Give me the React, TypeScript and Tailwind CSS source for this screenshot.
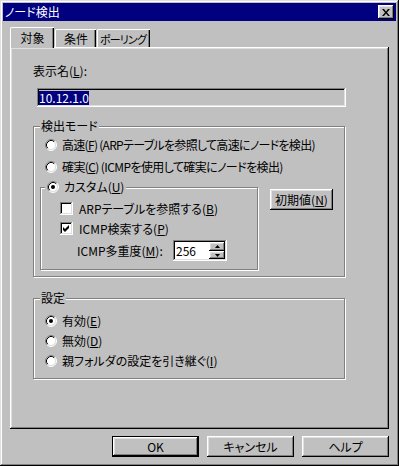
import React from "react";

const raised =
  "shadow-[inset_-1px_-1px_#000,inset_1px_1px_#fff,inset_-2px_-2px_#808080,inset_2px_2px_#dfdfdf]";
const sunken =
  "shadow-[inset_-1px_-1px_#fff,inset_1px_1px_#808080,inset_-2px_-2px_#dfdfdf,inset_2px_2px_#000]";

const Radio = ({ checked = false }: { checked?: boolean }) => (
  <svg width="12" height="12" viewBox="0 0 12 12" className="shrink-0">
    <circle cx="6" cy="6" r="5" fill="#fff" />
    <path d="M2.11 9.89 A5.5 5.5 0 0 1 9.89 2.11" fill="none" stroke="#808080" />
    <path d="M9.89 2.11 A5.5 5.5 0 0 1 2.11 9.89" fill="none" stroke="#fff" />
    <path d="M2.82 9.18 A4.5 4.5 0 0 1 9.18 2.82" fill="none" stroke="#000" />
    <path d="M9.18 2.82 A4.5 4.5 0 0 1 2.82 9.18" fill="none" stroke="#dfdfdf" />
    {checked && <circle cx="6" cy="6" r="2" fill="#000" />}
  </svg>
);

const Check = ({ checked = false }: { checked?: boolean }) => (
  <div className={`w-[13px] h-[13px] shrink-0 bg-white ${sunken}`}>
    {checked && (
      <svg width="13" height="13" viewBox="0 0 13 13">
        <path d="M3 5 l2 2 l4 -4 v3 l-4 4 l-2 -2 z" fill="#000" />
      </svg>
    )}
  </div>
);

const Group = ({
  label,
  className,
  children,
}: {
  label: React.ReactNode;
  className: string;
  children: React.ReactNode;
}) => (
  <div
    className={`relative border border-[#808080] shadow-[inset_1px_1px_#fff,1px_1px_#fff] ${className}`}
  >
    <div className="absolute top-[-9px] left-[6px] bg-[#c0c0c0] px-[1px]">{label}</div>
    {children}
  </div>
);

const Button = ({
  children,
  className = "",
  isDefault = false,
}: {
  children: React.ReactNode;
  className?: string;
  isDefault?: boolean;
}) => (
  <div className={`${isDefault ? "border border-black" : ""} ${className}`}>
    <div className={`w-full h-full flex items-center justify-center ${raised}`}>{children}</div>
  </div>
);

export default function App() {
  return (
    <div className="w-[399px] h-[466px] bg-[#c0c0c0] p-[3px] shadow-[inset_-1px_-1px_#000,inset_1px_1px_#dfdfdf,inset_-2px_-2px_#808080,inset_2px_2px_#fff] text-[12px] leading-4 text-black whitespace-nowrap [font-feature-settings:'palt'] font-['Noto_Sans_CJK_JP',sans-serif]">
      {/* title bar */}
      <div className="h-[18px] bg-[#000080] flex items-center justify-between px-[2px]">
        <span className="text-white">ノード検出</span>
        <div className={`w-[16px] h-[14px] bg-[#c0c0c0] flex items-center justify-center ${raised}`}>
          <svg width="8" height="7" viewBox="0 0 8 7">
            <path d="M0 0h2l2 2.5L6 0h2L5 3.5L8 7H6L4 4.5L2 7H0l3-3.5z" fill="#000" />
          </svg>
        </div>
      </div>

      <div className="px-[7px] pt-[6px]">
        {/* tabs */}
        <div className="flex items-end h-[20px]">
          <div className="relative z-10 -mb-px h-[21px] w-[44px] bg-[#c0c0c0] border-t border-l border-white rounded-tl-[2px] shadow-[inset_-1px_0_#000,inset_-2px_0_#808080] flex items-center justify-center">
            対象
          </div>
          <div className="ml-[1px] h-[18px] w-[41px] border-t border-l border-white rounded-tl-[2px] shadow-[inset_-1px_0_#000,inset_-2px_0_#808080] flex items-center justify-center">
            条件
          </div>
          <div className="ml-[1px] h-[18px] w-[53px] border-t border-l border-white rounded-tl-[2px] shadow-[inset_-1px_0_#000,inset_-2px_0_#808080] flex items-center justify-center text-[11px] tracking-[-0.8px] pr-[2px]">
            ポーリング
          </div>
        </div>

        {/* panel */}
        <div className={`h-[382px] pt-[16px] pl-[23px] ${raised}`}>
          <div>
            表示名(<u>L</u>):
          </div>
          <div className={`mt-[9px] ml-[4px] w-[309px] h-[19px] bg-[#c0c0c0] flex items-center pl-[2px] ${sunken}`}>
            <span className="bg-[#000080] text-white leading-[14px]">10.12.1.0</span>
          </div>

          <Group label="検出モード" className="mt-[19px] w-[312px] h-[151px] pt-[10px] pl-[11px]">
            <div className="flex items-center gap-[5px] h-[16px]">
              <Radio />
              <span className="tracking-[-0.7px]">
                高速(<u>F</u>) (ARPテーブルを参照して高速にノードを検出)
              </span>
            </div>
            <div className="flex items-center gap-[5px] h-[16px] mt-[6px]">
              <Radio />
              <span className="tracking-[-0.6px]">
                確実(<u>C</u>) (ICMPを使用して確実にノードを検出)
              </span>
            </div>
            <div className="flex items-start mt-[12px] -ml-[5px]">
              <div className="relative w-[218px] h-[83px] border border-[#808080] shadow-[inset_1px_1px_#fff,1px_1px_#fff] pt-[14px] pl-[19px]">
                <div className="absolute top-[-9px] left-[4px] bg-[#c0c0c0] px-[2px] flex items-center gap-[5px] h-[16px]">
                  <Radio checked />
                  <span>
                    カスタム(<u>U</u>)
                  </span>
                </div>
                <div className="flex items-center gap-[6px] h-[13px]">
                  <Check />
                  <span>
                    ARPテーブルを参照する(<u>B</u>)
                  </span>
                </div>
                <div className="flex items-center gap-[6px] h-[13px] mt-[7px]">
                  <Check checked />
                  <span>
                    ICMP検索する(<u>P</u>)
                  </span>
                </div>
                <div className="flex items-center mt-[5px]">
                  <span className="ml-[17px] w-[96px]">
                    ICMP多重度(<u>M</u>):
                  </span>
                  <div className={`w-[54px] h-[21px] bg-white flex items-center justify-between pl-[3px] pr-[2px] ${sunken}`}>
                    <span>256</span>
                    <div className="flex flex-col gap-0">
                      <div className={`w-[16px] h-[9px] bg-[#c0c0c0] flex items-center justify-center ${raised}`}>
                        <svg width="5" height="3" viewBox="0 0 5 3">
                          <path d="M2.5 0L5 3H0z" fill="#000" />
                        </svg>
                      </div>
                      <div className={`w-[16px] h-[8px] bg-[#c0c0c0] flex items-center justify-center ${raised}`}>
                        <svg width="5" height="3" viewBox="0 0 5 3">
                          <path d="M0 0h5L2.5 3z" fill="#000" />
                        </svg>
                      </div>
                    </div>
                  </div>
                </div>
              </div>
              <Button className="ml-[12px] mt-[2px] w-[63px] h-[21px]">
                <span>
                  初期値(<u>N</u>)
                </span>
              </Button>
            </div>
          </Group>

          <Group label="設定" className="mt-[21px] w-[312px] h-[81px] pt-[14px] pl-[11px]">
            <div className="flex items-center gap-[5px] h-[16px]">
              <Radio checked />
              <span>
                有効(<u>E</u>)
              </span>
            </div>
            <div className="flex items-center gap-[5px] h-[16px] mt-[4px]">
              <Radio />
              <span>
                無効(<u>D</u>)
              </span>
            </div>
            <div className="flex items-center gap-[5px] h-[16px] mt-[4px]">
              <Radio />
              <span>
                親フォルダの設定を引き継ぐ(<u>I</u>)
              </span>
            </div>
          </Group>
        </div>

        {/* buttons */}
        <div className="flex justify-end gap-[8px] mt-[7px]">
          <Button isDefault className="w-[87px] h-[21px]">
            OK
          </Button>
          <Button className="w-[87px] h-[21px]">キャンセル</Button>
          <Button className="w-[87px] h-[21px]">ヘルプ</Button>
        </div>
      </div>
    </div>
  );
}
